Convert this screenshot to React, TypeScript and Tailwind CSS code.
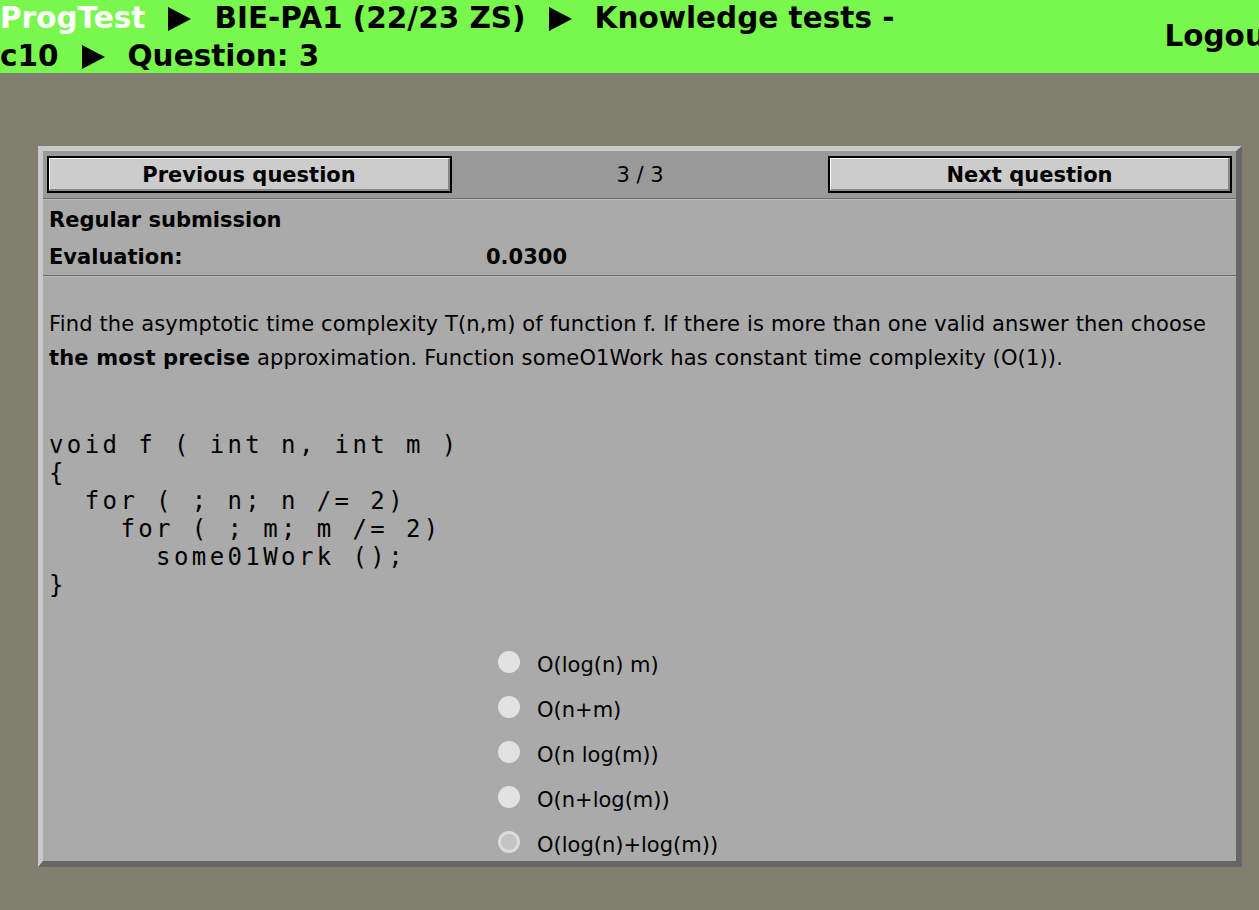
const options = ["O(log(n) m)", "O(n+m)", "O(n log(m))", "O(n+log(m))", "O(log(n)+log(m))"];

const code = `void f ( int n, int m )
{
  for ( ; n; n /= 2)
    for ( ; m; m /= 2)
      some01Work ();
}`;

const Arrow = () => (
  <span className="inline-flex w-[69px] justify-center align-[-3px]">
    <svg width="23" height="24" viewBox="0 0 23 24" aria-hidden="true">
      <polygon points="0,0 23,12 0,24" fill="black" />
    </svg>
  </span>
);

const NavButton = (props: { label: string }) => {
  return (
    <button
      type="button"
      className="h-[37px] w-full border-2 border-black bg-[#cccccc] text-[21px] font-bold text-black"
    >
      <span className="flex h-full w-full items-center justify-center border-t border-l border-t-white border-l-white border-r-2 border-b-2 border-r-[#888888] border-b-[#888888] pt-[3px]">
        {props.label}
      </span>
    </button>
  );
};

const Separator = () => (
  <div>
    <div className="h-px bg-[#6a6a6a]" />
    <div className="h-px bg-[#bcbcbc]" />
  </div>
);

export default function App() {
  return (
    <div
      className="h-[910px] w-[1259px] overflow-hidden bg-[#807f70]"
      style={{ fontFamily: '"DejaVu Sans", Verdana, sans-serif' }}
    >
      <div className="w-[1280px]">
        <div className="flex h-[73px] items-center justify-between bg-[#78f84c]">
          <div className="text-[29.5px] font-bold leading-[38px] text-black">
            <span className="text-white">ProgTest</span>
            <Arrow />
            BIE-PA1 (22/23 ZS)
            <Arrow />
            Knowledge tests -
            <br />
            c10
            <Arrow />
            Question: 3
          </div>
          <div className="text-[29.5px] font-bold text-black">Logout</div>
        </div>

        <div className="px-[38px] pt-[73px]">
          <div className="border-[5px] border-t-[#c8c8c8] border-l-[#c8c8c8] border-r-[6px] border-b-[6px] border-r-[#666666] border-b-[#666666] bg-[#aaaaaa]">
            <div className="grid grid-cols-[405px_1fr_404px] items-center bg-[#999999] px-[4px] py-[5px]">
              <NavButton label="Previous question" />
              <div className="pt-[3px] text-center text-[21px] text-black">3 / 3</div>
              <NavButton label="Next question" />
            </div>
            <Separator />
            <div className="px-[6px] text-[21px] font-bold text-black">
              <div className="flex h-[38px] items-center pt-[4px]">Regular submission</div>
              <div className="flex h-[37px] items-center pt-[3px]">
                <span className="w-[437px]">Evaluation:</span>
                <span>0.0300</span>
              </div>
            </div>
            <Separator />
            <div className="px-[6px] pt-[30px] text-[21px] text-black">
              <p className="leading-[34px] tracking-[0.15px]">
                Find the asymptotic time complexity T(n,m) of function f. If there is more than one valid answer then choose{" "}
                <b>the most precise</b> approximation. Function someO1Work has constant time complexity (O(1)).
              </p>
              <pre
                className="mt-[56px] text-[24px] leading-[28px] tracking-[3.4px] text-black"
                style={{ fontFamily: '"DejaVu Sans Mono", "Liberation Mono", monospace' }}
              >
                {code}
              </pre>
              <div className="mt-[52px] flex flex-col gap-[15px] pl-[449px]">
                {options.map((o, i) => (
                  <label key={o} className="flex h-[30px] items-center gap-[17px]">
                    {i === options.length - 1 ? (
                      <span className="-mt-[8px] h-[22px] w-[22px] rounded-full border-[3px] border-[#dcdcdc] bg-[#c4c4c4]" />
                    ) : (
                      <span className="-mt-[8px] h-[22px] w-[22px] rounded-full bg-[#e2e2e2]" />
                    )}
                    <span>{o}</span>
                  </label>
                ))}
              </div>
            </div>
          </div>
        </div>
      </div>
    </div>
  );
}
